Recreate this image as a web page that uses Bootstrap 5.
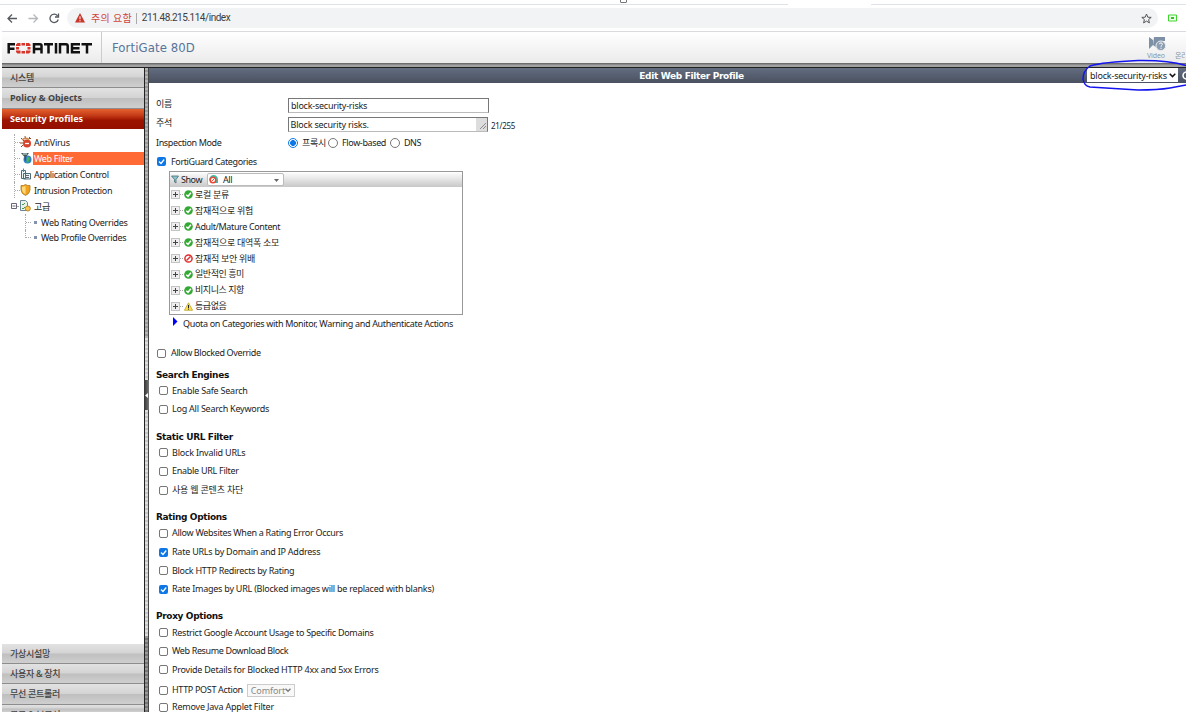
<!DOCTYPE html>
<html lang="ko">
<head>
<meta charset="utf-8">
<title>FortiGate 80D</title>
<link rel="stylesheet" href="https://cdn.jsdelivr.net/npm/bootstrap@5.3.0/dist/css/bootstrap.min.css">
<style>
html,body{height:100%;overflow:hidden}
body{font:9px/12px "Noto Sans","Noto Sans CJK KR",sans-serif;letter-spacing:-.28px;color:#1c1c1c;background:#fff;position:relative}
svg{display:block;flex:none}
.t{white-space:nowrap}
.l0{letter-spacing:.02px}.l10{letter-spacing:-.1px}.l20{letter-spacing:-.2px}.l24{letter-spacing:-.235px}.l33{letter-spacing:-.33px}.l38{letter-spacing:-.37px}.l45{letter-spacing:-.45px}
.tabline{height:5px;position:relative}
.tabline i{height:1px;background:#dfe2e8;margin-top:4px}
.grip{left:620px;top:-4px;width:7px;height:7px;border:1px solid #777;border-radius:1px}
.chrome{height:26px}
.omni{height:20px;background:#f1f3f4;border-radius:10px;width:1091px}
.url{font:10px/20px Roboto,sans-serif;color:#3c4043;letter-spacing:-.47px}
.warn{font:10px/20px "Noto Sans CJK KR",sans-serif;color:#d0453c;letter-spacing:.25px}
.brandbar{height:32px;margin-left:2px;border-top:1px solid #d9dadd;background:linear-gradient(#fff,#ebebeb)}
.brandcell{width:100px;border-right:1px solid #ccc}
.product{font:13px/31px "DejaVu Sans Condensed","DejaVu Sans",sans-serif;color:#57749a;letter-spacing:.1px}
.stripe{height:5px;margin-left:2px;background:linear-gradient(#6c6c6c 0 1px,#8a8a8a 1px 2px,#a2a2a2 2px 4px,#222 4px)}
.workarea{height:644px;margin-left:2px}
.side{width:142px}
.acc{height:20.3px;flex:none;border-bottom:1px solid #8d8d8d;padding-left:8px;background:linear-gradient(#e2e2e2,#d4d4d4 48%,#bfbfbf 52%,#cfcfcf);color:#444;font-weight:700;line-height:20px;letter-spacing:.02px}
.acc.kr{font-weight:500;letter-spacing:-.3px}
.acc.on{background:linear-gradient(#e5622f,#c43a17 35%,#9c1400 60%,#961000);color:#fff;border-color:#961000}
.tree{padding-top:5.500px}
.node{height:15.95px}
.node .lab{padding:0 2px;height:13px;line-height:13px}
.node .on{background:#ff6a35;color:#fff}
.stem{width:18px;align-self:stretch;padding-left:12px}
.stem:before,.stem2:before{content:"";border-left:1px dotted #aaa;height:100%}
.stem:after,.stem2:after{content:"";border-top:1px dotted #aaa;width:5px}
.stem2{width:9px;margin-left:23px;align-self:stretch}
.node:last-child .stem2:before{height:50%;align-self:flex-start}
.bul{width:3px;height:3px;background:#8493ad;margin-right:2px}
.split{width:5px;border-left:1px solid #222;border-right:1px solid #444;background:repeating-linear-gradient(#ddd 0 2px,#c4c4c4 2px 4px)}
.split.mid{background:repeating-linear-gradient(#b4b4b4 0 2px,#989898 2px 4px)}
.split.dark{background:repeating-linear-gradient(#999 0 2px,#777 2px 4px)}
.knob{height:30px;background:linear-gradient(90deg,#333,#777);color:#fff;margin:0 -1px}
.titlebar{height:15px;background:linear-gradient(#626d80,#4a5160);color:#fff;font:bold 9px/16px "DejaVu Sans",sans-serif}
.content{padding:15px 0 0 7px}
.field{margin-bottom:4px;height:15px}
.field>.t:first-child{width:132px}
.tin{border:1px solid #777;border-bottom-color:#bbb;height:15px;line-height:14px;padding-left:2px;background:#fff}
.cb{width:9px;height:9px;border:1px solid #767676;border-radius:2px;background:#fff;flex:none}
.cb.ck{border:0;background:#0d77e8}
.rd{width:10px;height:10px;border:1px solid #767676;border-radius:50%;flex:none}
.rd.ck{border-color:#0d77e8;background:radial-gradient(#0d77e8 0 2.6px,#fff 3.2px)}
.panel{width:294px;height:144px;margin:2px 0 0 13px;border:1px solid #999}
.panelhead{height:15px;background:linear-gradient(#fff,#c8c8c8);padding-left:1px}
.drop{width:77px;height:13px;border:1px solid #bbb;background:#fff;border-radius:2px;line-height:11px}
.cat{height:15.9px;padding-left:1px}
.plus{width:9px;height:9px;border:1px solid #c4c4c4;background:#eee;position:relative}
.plus:before,.plus:after{content:"";position:absolute;background:#444}
.plus:before{left:1px;top:3px;width:5px;height:1px}
.plus:after{left:3px;top:1px;width:1px;height:5px}
.dash{width:3px;margin-right:1px;border-top:1px dotted #aaa}
.sec{font:bold 9px/17px "DejaVu Sans",sans-serif;color:#111;height:15px;letter-spacing:-.36px}
.group{margin-bottom:9.8px}
.opt{height:18.6px;padding-left:3px;gap:4px}
.sel{border:1px solid #ccc;height:13px;line-height:11px;color:#888;background:#f8f8f8;width:48px;padding:0 3px}
.pick{right:8px;top:0;width:91px;height:14px;background:#fff;color:#222;padding:0 2px 0 3px;font:9px/13px "Noto Sans",sans-serif}
.ink{left:1078px;top:56px}
.vid{font-size:7px;line-height:8px;color:#8796a8;letter-spacing:-.1px}
</style>
</head>
<body>
<div class="tabline d-flex"><i style="width:788px"></i><span style="width:83px"></span><i class="flex-fill"></i><b class="grip position-absolute"></b></div>
<div class="chrome d-flex align-items-center">
<svg width="67" height="20" fill="none" stroke="#555a60" stroke-width="1.3"><path d="M17 10.500H8.500M12 6.500L8 10.500L12 14.500"/><path stroke="#b5b7ba" d="M28.500 10.500H37M33.500 6.500L37.500 10.500L33.500 14.500"/><path d="M57.500 7.800A4.200 4.200 0 1 0 58.200 11.500M58.500 5.500V9H55"/></svg>
<div class="omni d-flex align-items-center">
<svg class="ms-2" width="10" height="10"><path d="M5 0L10 9.500H0Z" fill="#c8352b"/><path d="M5 3.300V6.300M5 7.200V8.400" stroke="#fff"/></svg>
<span class="t warn" style="margin-left:6px">주의 요함</span><i style="border-left:1px solid #aaa;height:11px;margin:0 5px 0 4px"></i><span class="t url">211.48.215.114/index</span>
<svg class="ms-auto" style="margin-right:6px" width="11" height="11" fill="none" stroke="#555"><path d="M5.500 1L6.800 4.200L10.200 4.400L7.600 6.600L8.400 9.900L5.500 8.100L2.600 9.900L3.400 6.600L.8 4.400L4.200 4.200Z"/></svg></div>
<svg style="margin-left:10px" width="9" height="8"><path d="M.5 1H8.500V7H.5Z" fill="#efe" stroke="#3fd62c"/><path d="M3 3H6V5H3Z" fill="#2fc41c"/></svg>
</div>
<div class="brandbar d-flex">
<div class="brandcell d-flex align-items-center"><svg width="96" height="14" fill="none" stroke="#111" stroke-width="2.500"><path d="M13 3.200H6.700V12.500M7 7.700H12.500"/><g fill="#d8352a" stroke="none"><path d="M15.500 2H18.500V5H14V3.500ZM19.500 2H23V4.500H19.500ZM24 2H27L28.500 3.500V5H24ZM14 6H17V8.500H14ZM25.500 6H28.500V8.500H25.500ZM14 9.500H18.500V12.500H15.500L14 11ZM19.500 10H23V12.500H19.500ZM24 9.500H28.500V11L27 12.500H24Z"/></g><path d="M32 12.500V3.200H38Q39.500 3.200 39.500 4.500V8H32M39.500 8V12.500M42 3.200H51M46.500 3.200V12.500M54 2V12.500M58 12.500V3.200H64Q65.700 3.200 65.700 5V12.500M78 3.200H70V11.300H78M70 7.300H77.500M79.500 3.200H90M85 3.200V12.500"/></svg></div>
<span class="t product" style="margin-left:10px">FortiGate 80D</span>
<div class="ms-auto d-flex" style="width:40px">
<div style="width:30px;padding:4px 0 0 1px"><svg style="margin-left:1px" width="20" height="16"><path d="M1 1L5 4V9L1 13ZM6 1H17V5H13L9 8V12L5 9Z" fill="#7d90a6"/><circle cx="12.800" cy="9.800" r="4.800" fill="#8c9db2" stroke="#eee"/><path d="M11.300 8.200Q11.500 6.900 13 6.900Q14.600 7.200 14.400 8.500Q13 9.400 13 10.800M13 11.700V12.900" stroke="#fff" fill="none"/></svg><div class="t vid l10">Video</div></div>
<div class="t vid overflow-hidden" style="padding-top:20px;width:10px;margin-left:-1px">온라인</div></div>
</div>
<div class="stripe"></div>
<div class="workarea d-flex">
<nav class="side d-flex flex-column">
<div class="acc kr t">시스템</div><div class="acc t">Policy &amp; Objects</div><div class="acc on t">Security Profiles</div>
<div class="tree flex-fill">
<div class="node d-flex align-items-center"><span class="stem d-flex align-items-center"></span><svg width="12" height="12"><path d="M1 2L4 5M5 0L5.500 3M10 2L8 4M0 7H3M1 11L3 9M9 1L11 3" stroke="#8a4a2c" fill="none"/><ellipse cx="7" cy="7.500" rx="4" ry="4" fill="#d8432b"/><path d="M5 7.500H9" stroke="#fff" stroke-width="1.300"/><path d="M2 4Q5 1 9 3.500" stroke="#c98a50" stroke-width="1.500" fill="none"/></svg><span class="lab t">AntiVirus</span></div>
<div class="node d-flex align-items-center"><span class="stem d-flex align-items-center"></span><svg width="12" height="12"><circle cx="7.500" cy="7.500" r="4" fill="#2f7fd0"/><path d="M7 4L10 6L8.500 10L6.500 11Z" fill="#45b649"/><path d="M1 1H9L6 5V9L4.500 8V5Z" fill="#455"/><path d="M3 2H7" stroke="#dee"/></svg><span class="lab on t flex-fill l33" style="margin-left:1px;padding-left:1px">Web Filter</span></div>
<div class="node d-flex align-items-center"><span class="stem d-flex align-items-center"></span><svg width="12" height="12" fill="#eef5f5" stroke="#4a6c7a"><path d="M1.500 2.500H5.500V10.500H1.500ZM3.500 5.500H10.500V11H3.500Z"/><path d="M5 7.500H9M5 9.500H9" stroke="#666"/><path d="M3.500.5V4" stroke="#4a9a50"/></svg><span class="lab t l33">Application Control</span></div>
<div class="node d-flex align-items-center"><span class="stem d-flex align-items-center"></span><svg width="12" height="12"><path d="M1 1.500Q3.500 2 5.500.5Q7.500 2 10 1.500V6Q9.500 10 5.500 11.500Q1.500 10 1 6Z" fill="#f0a21c" stroke="#a87820" stroke-width=".8"/><path d="M5.500 2V10Q2.500 9 2 6V3Z" fill="#ffd878"/></svg><span class="lab t l33">Intrusion Protection</span></div>
<div class="node d-flex align-items-center"><svg style="margin-left:8px" width="9" height="8"><path d="M1.500 1.500H6.500V6.500H1.500ZM2.500 4H5.500" fill="#fff" stroke="#667"/><path d="M7 4.500H10" stroke="#aaa"/></svg><svg width="13" height="12"><path d="M1.500.5H6.500L8.500 2.500V10.500H1.500Z" fill="#e8f1ec" stroke="#6a8595"/><path d="M3 4L4 5L6 3M3 8L4 9L6 7" stroke="#4c9a50" fill="none"/><circle cx="8.800" cy="8.500" r="2.500" fill="#ffc44a" stroke="#b8862c"/></svg><span class="lab t">고급</span></div>
<div class="node d-flex align-items-center"><span class="stem2 d-flex align-items-center"></span><b class="bul"></b><span class="lab t">Web Rating Overrides</span></div>
<div class="node d-flex align-items-center"><span class="stem2 d-flex align-items-center"></span><b class="bul"></b><span class="lab t l33">Web Profile Overrides</span></div>
</div>
<div class="acc kr t l38">가상시설망</div><div class="acc kr t">사용자 &amp; 장치</div><div class="acc kr t">무선 콘트롤러</div><div class="acc kr t overflow-hidden" style="height:7.500px;border:0">로그 &amp; 보고서</div>
</nav>
<div class="d-flex flex-column"><div class="split mid" style="height:270px"></div><div class="split" style="height:42px"></div><div class="split" style="height:30px"><div class="knob"><svg width="5" height="30"><path d="M4 13V18L1 15.500Z" fill="#fff"/></svg></div></div><div class="split" style="height:226px"></div><div class="split dark flex-fill"></div></div>
<main class="flex-fill">
<div class="titlebar text-center position-relative"><span class="t l33" style="margin-left:48px">Edit Web Filter Profile</span><div class="pick position-absolute d-flex align-items-center"><span class="t l20">block-security-risks</span><svg class="ms-auto" width="7" height="5" fill="none" stroke="#111" stroke-width="1.500"><path d="M.7.8L3.500 3.600L6.300.8"/></svg></div><svg class="position-absolute" style="right:0;top:3px" width="4" height="9"><circle cx="4.500" cy="4.500" r="3.500" fill="none" stroke="#fff" stroke-width="1.500"/></svg></div>
<div class="content">
<div class="field d-flex"><span class="t">이름</span><div class="tin t l24" style="width:201px">block-security-risks</div></div>
<div class="field d-flex mb-0" style="height:18px"><span class="t">주석</span><div class="tin t d-flex" style="width:200px;padding-left:1.500px"><span class="l20">Block security risks.</span><svg class="ms-auto" width="11" height="13"><path d="M0 0H11V13H0Z" fill="#ddd"/><path d="M4 11L10 5M7 11L10 8" stroke="#777" stroke-width=".8"/></svg></div><span class="t l33" style="font-size:8px;line-height:17px;margin-left:3px">21/255</span></div>
<div class="field d-flex align-items-center"><span class="t l38">Inspection Mode</span><b class="rd ck"></b><span class="t" style="width:23px;margin:0 3px 0 4px">프록시</span><b class="rd"></b><span class="t l38" style="width:44px;margin:0 4px 0 4px">Flow-based</span><b class="rd"></b><span class="t ms-1 l45">DNS</span></div>
<div class="field d-flex align-items-center m-0" style="padding-left:1px;gap:5px"><b class="cb ck"><svg width="9" height="9"><path d="M2 4.500L4 6.500L7.200 2.500" stroke="#fff" stroke-width="1.300" fill="none"/></svg></b><span class="t w-auto l38">FortiGuard Categories</span></div>
<div class="panel">
<div class="panelhead d-flex align-items-center"><svg width="8" height="9"><path d="M.5 1H7.500L5 4.500V8L3.500 7V4.500Z" fill="#8cc4cc" stroke="#47707a" stroke-width=".8"/></svg><span class="t l45" style="margin:0 4px 0 2px;width:22px">Show</span><div class="drop d-flex align-items-center"><svg style="margin:0 5px 0 1px" width="9" height="9"><path d="M4.500 0A4.500 4.500 0 0 1 9 4.500V8H4V4L.5 6A4.500 4.500 0 0 1 4.500 0Z" fill="#3abfae"/><circle cx="4" cy="5" r="2.800" fill="#fff" stroke="#e84a35" stroke-width="1.500"/><path d="M2.500 6.500L5.500 3.500" stroke="#e84a35"/></svg><span class="t l45">All</span><svg class="ms-auto me-1" style="margin-top:2px" width="5" height="3"><path d="M0 0H5L2.500 3Z" fill="#666"/></svg></div></div>
<div id="cats"></div>
</div>
<div class="d-flex align-items-center" style="height:17px;padding-left:17px"><svg style="margin-bottom:4px" width="5" height="9"><path d="M0 0L4.500 4.500L0 9Z" fill="#00f"/></svg><span class="t l33" style="margin-left:5px">Quota on Categories with Monitor, Warning and Authenticate Actions</span></div>
<div class="opt d-flex align-items-center" style="margin:12px 0 4px;padding-left:1px;gap:5px"><b class="cb"></b><span class="t l38">Allow Blocked Override</span></div>
<div id="groups"></div>
</div>
</main>
</div>
<svg class="ink position-absolute" width="108" height="38" fill="none" stroke="#1414f0" stroke-width="1.500"><path d="M108 9.500Q90 4 60 4.500Q25 6 12 10Q5 15 5 23Q6 30 12 31L60 34Q80 34 92 32L108 29"/></svg>
<script src="https://cdn.jsdelivr.net/npm/bootstrap@5.3.0/dist/js/bootstrap.bundle.min.js"></script>
<script>
const ok='<svg width="9" height="9"><circle cx="4.500" cy="4.500" r="4.300" fill="#35a935"/><path d="M2.300 4.700L4 6.300L6.900 2.700" stroke="#fff" stroke-width="1.500" fill="none"/></svg>';
const no='<svg width="9" height="9"><circle cx="4.500" cy="4.500" r="3.600" fill="#fff" stroke="#e22d2d" stroke-width="1.500"/><path d="M2.500 6.500L6.500 2.500" stroke="#e22d2d" stroke-width="1.500"/></svg>';
const wa='<svg width="9" height="9"><path d="M4.500.8L8.600 8.300H.4Z" fill="#ffe04a" stroke="#b99a20" stroke-width=".7"/><path d="M4.500 3V6M4.500 6.600V7.600" stroke="#222"/></svg>';
const cats=[[ok,'로컬 분류',''],[ok,'잠재적으로 위험',''],[ok,'Adult/Mature Content','l38'],[ok,'잠재적으로 대역폭 소모',''],[no,'잠재적 보안 위배',''],[ok,'일반적인 흥미','l45'],[ok,'비지니스 지향','l45'],[wa,'등급없음','l45']];
document.getElementById('cats').innerHTML=cats.map(([i,t,k])=>`<div class="cat d-flex align-items-center"><b class="plus"></b><i class="dash"></i>${i}<span class="t ${k}" style="margin-left:2px">${t}</span></div>`).join('');
const tick='<svg width="9" height="9"><path d="M2 4.500L4 6.500L7.200 2.500" stroke="#fff" stroke-width="1.300" fill="none"/></svg>';
const groups=[['Search Engines',[['Enable Safe Search','l24'],['Log All Search Keywords','l24']]],
['Static URL Filter',[['Block Invalid URLs','l20'],['Enable URL Filter',''],['사용 웹 콘텐츠 차단','l20']]],
['Rating Options',[['Allow Websites When a Rating Error Occurs',''],['Rate URLs by Domain and IP Address','l24',1],['Block HTTP Redirects by Rating',''],['Rate Images by URL (Blocked images will be replaced with blanks)','l24',1]]],
['Proxy Options',[['Restrict Google Account Usage to Specific Domains',''],['Web Resume Download Block','l38'],['Provide Details for Blocked HTTP 4xx and 5xx Errors','l24'],['HTTP POST Action','l33',0,'Comfort'],['Remove Java Applet Filter','l20']]]];
document.getElementById('groups').innerHTML=groups.map(([h,o])=>`<section class="group"><div class="sec t">${h}</div>${o.map(([t,k,c,s])=>`<div class="opt d-flex align-items-center ${s?'pt-1':''}"><b class="cb ${c?'ck':''}">${c?tick:''}</b><span class="t ${k}">${t}</span>${s?`<div class="sel d-flex align-items-center"><span class="t l10">${s}</span><svg class="ms-auto" width="6" height="5" fill="none" stroke="#777" stroke-width="1.300"><path d="M.5.8L3 3.300L5.500.8"/></svg></div>`:''}</div>`).join('')}</section>`).join('');
</script>
</body>
</html>
